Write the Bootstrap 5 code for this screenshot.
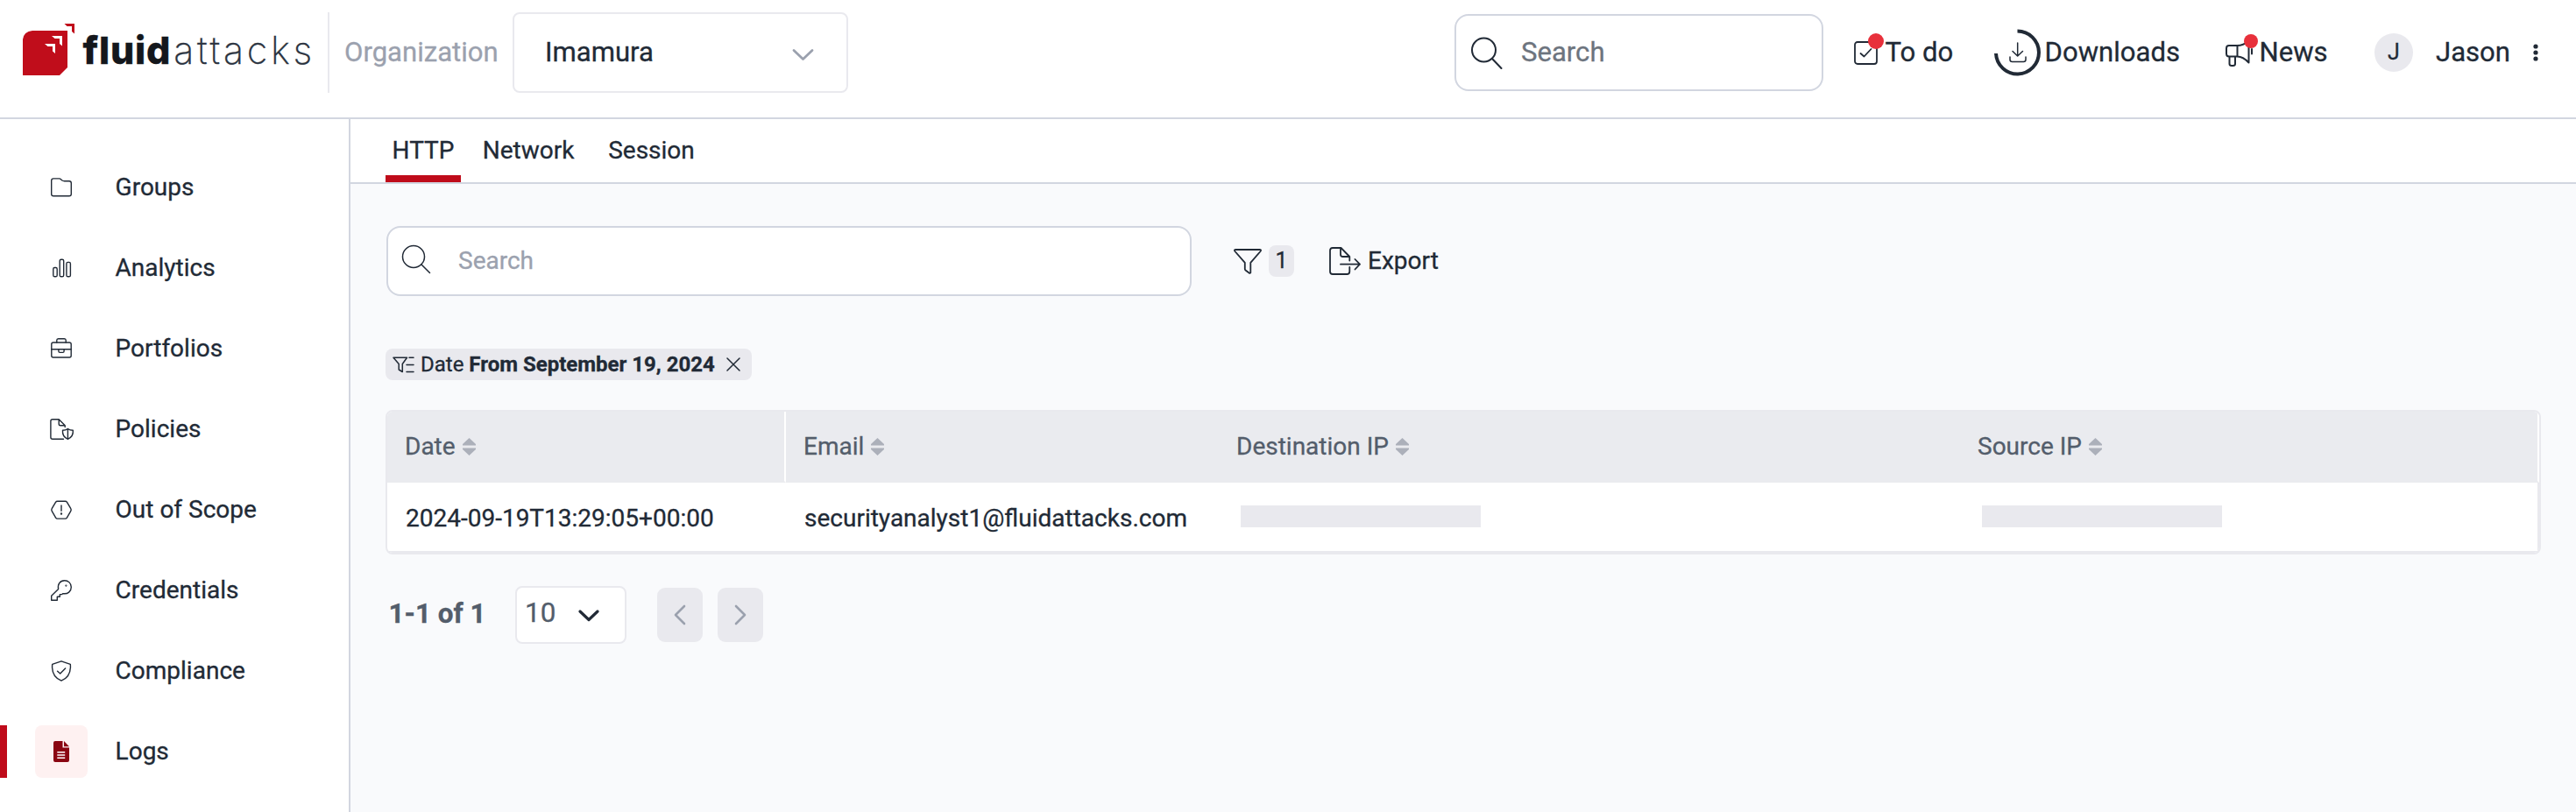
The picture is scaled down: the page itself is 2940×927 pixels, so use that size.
<!DOCTYPE html>
<html lang="en">
<head>
<meta charset="utf-8">
<title>Fluid Attacks - Logs</title>
<meta name="viewport" content="width=device-width, initial-scale=1">
<link href="https://cdn.jsdelivr.net/npm/bootstrap@5.3.0/dist/css/bootstrap.min.css" rel="stylesheet">
<style>
:root{--ink:#212a36;--muted:#535d6b;--soft:#9ba1ae;--line:#d2d6e0;--pale:#e9e9ee;--red:#bf0b1a}
body{font-family:Roboto,sans-serif;font-size:28px;line-height:1.2;color:var(--ink);background:#fff;height:927px;overflow:hidden;-webkit-text-stroke:.3px}
svg{display:block;flex:none;fill:none;stroke:var(--ink);stroke-width:1.5;stroke-linecap:round;stroke-linejoin:round}
a{color:inherit;text-decoration:none}
.topbar{height:136px;padding:0 0 14px;border-bottom:2px solid var(--line);font-size:31.1px}
.brand{width:374px;padding-left:26px}
.brand-mark{margin-bottom:7px}
.brand-name{font-family:Inter,sans-serif;font-size:43px;font-weight:800;letter-spacing:.8px;color:#14171c;margin:0 0 5px 8.5px;line-height:1;white-space:nowrap}
.brand-name span{font-weight:200;letter-spacing:3.7px;color:#2b3340;margin-left:3px}
.rule{width:2px;height:92px;background:var(--pale)}
.org-label{width:209px;padding-left:17px;color:var(--soft)}
.org-select{width:383px;height:92px;border:2px solid var(--pale);border-radius:8px;padding:0 37px 0 35px}
.top-search{width:421px;height:88px;border:2px solid var(--line);border-radius:16px;padding-left:17px;color:#6d747e}
.top-link{position:relative}
.ping{position:absolute;border-radius:50%;background:#e8303b}
.avatar-dot{width:44px;height:44px;border-radius:50%;background:#e9e9ee;font-size:25px}
.sidebar{width:400px;border-right:2px solid var(--line);padding-top:48px;gap:32px}
.side-link{height:60px;padding:0 0 0 40px;border-radius:0}
.side-link .ico{width:60px;height:60px;border-radius:8px;margin-right:31.6px}
.side-link svg{stroke-width:1.4}
.side-link.active{border-left:8px solid var(--red);padding-left:32px}
.side-link.active .ico{background:#fef1f1}
.content{background:#f9fafc}
.tabs{height:74px;background:#fff;border-bottom:2px solid var(--line);padding-left:40px}
.tab{height:72px;border-bottom:8px solid transparent;padding-top:19px}
.tab.active{border-color:var(--red)}
.pane{padding:48px 40px 0}
.log-search{width:919px;height:80px;margin-left:1px;border:2px solid var(--line);border-radius:16px;background:#fff;color:var(--soft);padding-left:15px}
.count{width:29px;height:36px;border-radius:8px;background:#e9e9ee;font-size:25px}
.filter-chip{height:36px;width:418px;margin-top:60px;border-radius:8px;background:#e9e9ee;font-size:24px;white-space:nowrap;padding-left:8px}
.log-table{margin-top:34px;border:2px solid var(--pale);border-radius:8px;overflow:hidden;width:2460px;background:#fff}
.log-table table{table-layout:fixed;width:2456px;border-collapse:separate;border-spacing:0}
.log-table th{height:81px;background:#eaebef;border-bottom:2px solid #eaebef;padding:0 0 0 20px;font-weight:400;color:var(--muted)}
.log-table th:first-child,.log-table th:last-child{border-right:2px solid #fff}
.log-table td{height:80px;padding:0 0 0 21px;border-bottom:2px solid var(--pale)}
.log-table td:last-child{border-right:2px solid var(--pale)}
.log-table td span{display:block;padding-top:4px}
.log-table svg{fill:#acb0ba;stroke:none;margin-left:8px}
.redacted{width:274px;height:25px;background:#e9e9ee;margin-left:3.5px;margin-top:-1px}
.pager{margin-top:36px;font-size:31.4px;color:var(--muted);padding-left:3.5px}
.page-size{width:127px;height:66px;border:2px solid var(--pale);border-radius:8px;background:#fff;padding-left:9px}
.page-btn{width:52px;height:62px;border-radius:9px;background:#e9e9ee}
</style>
</head>
<body class="d-flex flex-column">
<header class="topbar d-flex align-items-center flex-shrink-0">
  <a class="brand d-flex align-items-center" href="#">
    <svg class="brand-mark" width="60" height="60" viewBox="0 0 60 60" style="stroke:none"><path fill="#c00d1b" d="M11 8H51V50L42 59H0V18Q1 9 11 8Z"/><path fill="#c00d1b" d="M47.500 0H59V11.500L56 9V3H50.500Z"/><path fill="#fff" d="M33 14H45V25.500L42 23V17H36.500ZM25 23H37V34L34 31.500V26H28.500Z"/></svg>
    <div class="brand-name">fluid<span>attacks</span></div>
  </a>
  <div class="rule"></div>
  <div class="org-label">Organization</div>
  <div class="org-select d-flex align-items-center justify-content-between"><span>Imamura</span>
    <svg width="25" height="16" viewBox="0 0 25 16" style="stroke:#9ba1ae;stroke-width:2.8;margin-top:3px"><path d="M2 3.500L12.500 13.500L23 3.500"/></svg></div>
  <div class="top-search d-flex align-items-center ms-auto">
    <svg width="36" height="37" viewBox="0 0 36 37" style="stroke-width:2"><circle cx="14.500" cy="15" r="13.500"/><path d="M24 25L34.500 36"/></svg>
    <span style="margin-left:21px">Search</span></div>
  <a class="top-link d-flex align-items-center" href="#" style="width:160px;margin-left:35px">
    <svg width="27" height="27" viewBox="0 0 27 27" style="stroke-width:1.800"><rect x="1" y="1" width="25" height="25" rx="3"/><path d="M7.500 14L11.500 17.500L19.500 9"/></svg>
    <i class="ping" style="width:18px;height:18px;left:16px;top:-3px"></i><span style="margin-left:8.500px">To do</span></a>
  <a class="top-link d-flex align-items-center" href="#" style="width:264px">
    <svg width="53" height="54" viewBox="0 0 53 54"><path style="stroke-width:4;stroke-linecap:butt" d="M26.500 2.500A24.500 24.500 0 1 1 2 28"/><path d="M26.700 16V30.500M21 25.500L26.700 31L32.500 25.500M18 32V35Q18 37.500 20.500 37.500H33.500Q36 37.500 36 35V32"/></svg>
    <span style="margin-left:4.500px">Downloads</span></a>
  <a class="top-link d-flex align-items-center" href="#" style="width:170px">
    <svg width="32" height="32" viewBox="0 0 32 32" style="stroke-width:2"><path d="M13.500 8H4Q1 8 1 11V17.500Q1 20.500 4 20.500H13.500ZM13.500 8Q20 8 26.500 3V27.500Q20 20.500 13.500 20.500M4.500 20.500V29Q4.500 31 7 31H8.500Q11 31 11 29V20.500M30 12V17.500"/></svg>
    <i class="ping" style="width:16px;height:16px;left:20.500px;top:-2px"></i><span style="margin-left:6.500px">News</span></a>
  <div class="avatar-dot d-flex align-items-center justify-content-center">J</div>
  <div class="d-flex align-items-center" style="width:186px;padding-left:26px">Jason
    <svg width="6" height="22" viewBox="0 0 6 22" style="fill:#212a36;stroke:none;margin-left:26px"><circle cx="3" cy="4" r="2.600"/><circle cx="3" cy="11" r="2.600"/><circle cx="3" cy="18" r="2.600"/></svg></div>
</header>
<div class="d-flex flex-grow-1">
  <nav class="sidebar nav flex-column flex-nowrap flex-shrink-0">
    <a class="side-link d-flex align-items-center" href="#"><span class="ico"><svg width="60" height="60"><path d="M21 19.900H27.500Q28.800 19.900 29.800 21L31 22Q32 22.700 33.500 22.700H39Q41.300 22.700 41.300 25V37.500Q41.300 39.800 39 39.800H21Q18.700 39.800 18.700 37.500V22.200Q18.700 19.900 21 19.900Z"/></svg></span>Groups</a>
    <a class="side-link d-flex align-items-center" href="#"><span class="ico"><svg width="60" height="60"><rect x="20.800" y="29.500" width="4.400" height="10.300" rx="1.600"/><rect x="28.200" y="20.200" width="4.500" height="19.600" rx="1.600"/><rect x="35.900" y="23.400" width="4.500" height="16.400" rx="1.600"/></svg></span>Analytics</a>
    <a class="side-link d-flex align-items-center" href="#"><span class="ico"><svg width="60" height="60"><rect x="18.800" y="23" width="22.400" height="17" rx="2"/><path d="M24.800 23V20.600Q24.800 18.800 26.500 18.800H33.500Q35.200 18.800 35.200 20.600V23M18.800 30.700H41.200M26.900 30.700V33Q26.900 34.400 28.300 34.400H31.700Q33.100 34.400 33.100 33V30.700"/></svg></span>Portfolios</a>
    <a class="side-link d-flex align-items-center" href="#"><span class="ico"><svg width="60" height="60"><path d="M32.500 41.200H20Q17.900 41.200 17.900 39.200V20.800Q17.900 18.800 20 18.800H27.200L34.200 25.800V27.500M27.200 18.800V24Q27.200 25.800 29 25.800H34.200M37.400 29.600Q40 31.300 43.300 31.300Q44 38.500 37.400 41.300Q30.800 38.500 31.500 31.300Q34.800 31.300 37.400 29.600V41.300"/></svg></span>Policies</a>
    <a class="side-link d-flex align-items-center" href="#"><span class="ico"><svg width="60" height="60"><path d="M25.500 20.200H34.500Q35.800 20.200 36.500 21.300L40.800 28.700Q41.600 30 40.800 31.400L36.500 38.900Q35.800 40.100 34.500 40.100H25.500Q24.200 40.100 23.500 38.900L19.200 31.400Q18.400 30 19.200 28.700L23.500 21.300Q24.200 20.200 25.500 20.200ZM30 25V31.300"/><circle cx="30" cy="34.500" r=".5"/></svg></span>Out of Scope</a>
    <a class="side-link d-flex align-items-center" href="#"><span class="ico"><svg width="60" height="60"><path d="M18.700 41.200V36.200L26.600 28.500C25.500 23 28.500 18.700 33.700 18.700C38 18.700 41.300 22 41.300 26.200C41.300 31 37.500 34.700 31.600 33.600L30.700 34.600H28.300V37.300H25.300V41.200Z"/><circle cx="35.400" cy="24.600" r=".4"/></svg></span>Credentials</a>
    <a class="side-link d-flex align-items-center" href="#"><span class="ico"><svg width="60" height="60"><path d="M30 18.800L40.300 22.300Q41.600 36.500 30 41.100Q18.400 36.500 19.700 22.300ZM25.600 30.200L28.700 33L34.600 27"/></svg></span>Compliance</a>
    <a class="side-link active d-flex align-items-center" href="#"><span class="ico"><svg width="60" height="60"><path style="fill:#8a0612;stroke:none" d="M23 18H31.500V25.600H39V40Q39 42 37 42H23Q21 42 21 40V20Q21 18 23 18ZM33 18L39 24.200H33Z"/><path style="stroke:#fff;stroke-linecap:butt" d="M25.300 30.700H34.200M25.300 34H34.200M25.300 37.300H34.200"/></svg></span>Logs</a>
  </nav>
  <main class="content flex-grow-1">
    <div class="tabs d-flex text-center">
      <a class="tab active" href="#" style="width:86px">HTTP</a>
      <a class="tab" href="#" style="width:154px">Network</a>
      <a class="tab" href="#" style="width:127px">Session</a>
    </div>
    <div class="pane">
      <div class="d-flex align-items-center">
        <div class="log-search d-flex align-items-center">
          <svg width="34" height="34" viewBox="0 0 34 34" style="margin-bottom:4px"><circle cx="14" cy="14" r="12.500"/><path d="M23 23L32.500 32.500"/></svg><span style="margin-left:31px">Search</span></div>
        <svg width="32" height="29" viewBox="0 0 32 29" style="margin-left:48px;stroke-width:1.800"><path d="M2.500 1H29.500Q32 1 30.500 3L19.300 15.800V27.200Q18.500 28.300 17.500 27.500L13.500 24.500Q12.800 24 12.800 23V15.800L1.500 3Q0 1 2.500 1Z"/></svg>
        <span class="count d-flex align-items-center justify-content-center" style="margin-left:8px">1</span>
        <svg width="37" height="32" viewBox="0 0 37 32" style="margin-left:40px;stroke-width:1.800"><path d="M23.300 23V28Q23.300 31 20.300 31H4Q1 31 1 28V4Q1 1 4 1H13.500L23.300 11V15.500M13 1V8.500Q13 11 15.500 11H23.300M13 19.700H35M29.500 14L35 19.700L29.500 25.500"/></svg>
        <span style="margin-left:7px">Export</span>
      </div>
      <div class="filter-chip d-flex align-items-center">
        <svg width="25" height="19" viewBox="0 0 25 19"><path d="M1 1.200H16.500L11.300 8.500V17.500L7.200 15V8.500ZM19 1.200H24M16 9.500H24M16 17.500H24"/></svg>
        <span style="margin-left:7px">Date <b>From September 19, 2024</b></span>
        <svg width="16" height="16" viewBox="0 0 16 16" style="margin-left:13px"><path d="M1 1L15 15M15 1L1 15"/></svg>
      </div>
      <div class="log-table">
        <table>
          <colgroup><col style="width:455px"><col style="width:494px"><col style="width:846px"><col></colgroup>
          <thead><tr>
            <th><div class="d-flex align-items-center">Date<svg width="15" height="20"><path d="M7.500 0L15 7V8.500H0V7ZM0 11.500H15V13L7.500 20L0 13Z"/></svg></div></th>
            <th><div class="d-flex align-items-center">Email<svg width="15" height="20"><path d="M7.500 0L15 7V8.500H0V7ZM0 11.500H15V13L7.500 20L0 13Z"/></svg></div></th>
            <th><div class="d-flex align-items-center">Destination IP<svg width="15" height="20"><path d="M7.500 0L15 7V8.500H0V7ZM0 11.500H15V13L7.500 20L0 13Z"/></svg></div></th>
            <th><div class="d-flex align-items-center">Source IP<svg width="15" height="20"><path d="M7.500 0L15 7V8.500H0V7ZM0 11.500H15V13L7.500 20L0 13Z"/></svg></div></th>
          </tr></thead>
          <tbody><tr>
            <td><span>2024-09-19T13:29:05+00:00</span></td>
            <td><span>securityanalyst1@fluidattacks.com</span></td>
            <td><div class="redacted"></div></td>
            <td><div class="redacted"></div></td>
          </tr></tbody>
        </table>
      </div>
      <div class="pager d-flex align-items-center">
        <b style="width:144.500px;padding-bottom:2px">1-1 of 1</b>
        <div class="page-size d-flex align-items-center"><span class="pb-1">10</span><svg width="24" height="15" viewBox="0 0 24 15" style="stroke-width:3.200;margin-left:26px"><path d="M2 3L12 12.500L22 3"/></svg></div>
        <div class="page-btn d-flex align-items-center justify-content-center" style="margin-left:35px"><svg width="14" height="24" viewBox="0 0 14 24" style="stroke:#9ba1ae;stroke-width:2.600"><path d="M12 2L2 12L12 22"/></svg></div>
        <div class="page-btn d-flex align-items-center justify-content-center" style="margin-left:17px"><svg width="14" height="24" viewBox="0 0 14 24" style="stroke:#9ba1ae;stroke-width:2.600"><path d="M2 2L12 12L2 22"/></svg></div>
      </div>
    </div>
  </main>
</div>
<script src="https://cdn.jsdelivr.net/npm/bootstrap@5.3.0/dist/js/bootstrap.bundle.min.js"></script>
</body>
</html>
